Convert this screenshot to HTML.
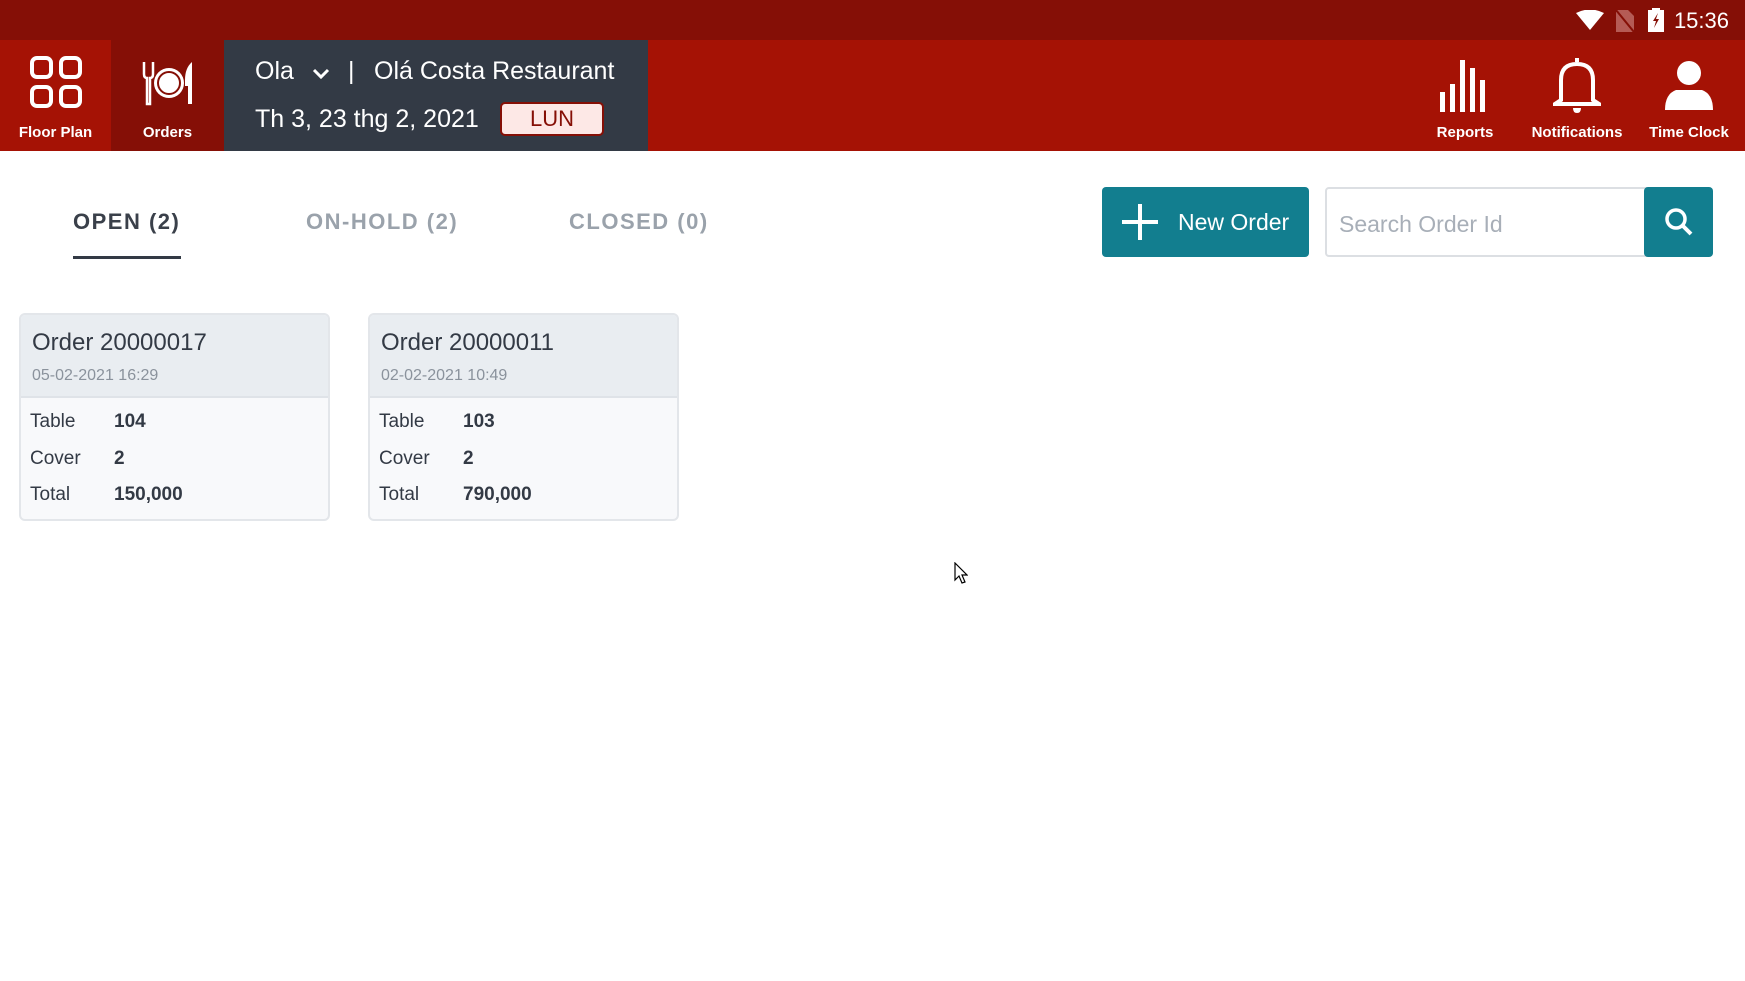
<!DOCTYPE html>
<html><head><meta charset="utf-8"><style>
*{margin:0;padding:0;box-sizing:border-box}
body{width:1745px;height:981px;background:#fff;font-family:"Liberation Sans",sans-serif;position:relative;overflow:hidden}
.abs{position:absolute}
.status{left:0;top:0;width:1745px;height:40px;background:#850f06}
.hdr{left:0;top:40px;width:1745px;height:111px;background:#a51205}
.tile{top:40px;height:111px;color:#fff;font-size:15px;font-weight:bold;text-align:center}
.tile .lbl{position:absolute;left:0;right:0;top:84px}
.tile svg{position:absolute;left:50%;transform:translateX(-50%);top:16px}
.panel{left:224px;top:40px;width:424px;height:111px;background:#333a45;color:#fff}
.tab{top:209px;font-size:22px;letter-spacing:1.5px;font-weight:bold}
.card{width:311px;height:208px;border:2px solid #e3e6ea;border-radius:6px;background:#f8f9fb;top:313px;overflow:hidden}
.card .h{height:83px;background:#e9edf1;border-bottom:2px solid #dfe3e8;padding:14px 0 0 11px}
.card .t{font-size:24px;color:#333a45}
.card .d{font-size:16px;color:#8a929c;margin-top:10px}
.row{position:absolute;left:9px;font-size:19px;color:#333a45}
.row b{position:absolute;left:84px;white-space:nowrap}
</style></head><body>
<div class="abs status"></div>
<div class="abs" style="right:16px;top:8px;color:#fff;font-size:22px">15:36</div>
<svg class="abs" style="left:1576px;top:10px" width="28" height="20"><path d="M0 3 Q14 -4 28 3 L14 20Z" fill="#fff"/></svg>
<svg class="abs" style="left:1616px;top:10px" width="18" height="22"><path d="M0 0H12L18 6V22H0Z" fill="#b55b55"/><path d="M0 0L18 22" stroke="#850f06" stroke-width="2"/></svg>
<svg class="abs" style="left:1648px;top:8px" width="16" height="24"><path d="M4 0H12V2H16V24H0V2H4Z" fill="#fff"/><path d="M10 5L5 13H8L6 20L11 11H8Z" fill="#850f06"/></svg>
<div class="abs hdr"></div>
<div class="abs tile" style="left:0;width:111px;background:#a51205"><svg width="52" height="52" viewBox="0 0 52 52" fill="none" stroke="#fff" stroke-width="4"><rect x="2" y="2" width="19" height="19" rx="5"/><rect x="31" y="2" width="19" height="19" rx="5"/><rect x="2" y="31" width="19" height="19" rx="5"/><rect x="31" y="31" width="19" height="19" rx="5"/></svg><div class="lbl">Floor Plan</div></div>
<div class="abs tile" style="left:111px;width:113px;background:#850f06"><svg width="52" height="46" viewBox="0 0 52 46" style="top:20px"><path d="M2 2V14Q2 18 5 18V44H8V18Q11 18 11 14V2" fill="none" stroke="#fff" stroke-width="2.5"/><circle cx="27" cy="23" r="15" fill="#fff"/><circle cx="27" cy="23" r="11" fill="none" stroke="#850f06" stroke-width="2"/><path d="M50 2Q43 8 43 20V26H46V44H50Z" fill="#fff"/></svg><div class="lbl">Orders</div></div>
<div class="abs panel">
<div class="abs" style="left:31px;top:17px;font-size:25px">Ola</div>
<svg class="abs" style="left:88px;top:28px" width="18" height="12"><path d="M2 2L9 9L16 2" fill="none" stroke="#fff" stroke-width="3"/></svg>
<div class="abs" style="left:124px;top:17px;font-size:25px">|</div>
<div class="abs" style="left:150px;top:17px;font-size:25px;white-space:nowrap">Olá Costa Restaurant</div>
<div class="abs" style="left:31px;top:65px;font-size:25px;white-space:nowrap">Th 3, 23 thg 2, 2021</div>
<div class="abs" style="left:276px;top:62px;width:104px;height:34px;background:#fde8e6;border:2px solid #850f06;border-radius:5px;color:#850f06;font-size:22px;text-align:center;line-height:30px">LUN</div>
</div>
<div class="abs tile" style="left:1410px;width:110px"><svg width="50" height="52" viewBox="0 0 50 52" style="top:20px"><rect x="0" y="32" width="5" height="20" fill="#fff"/><rect x="10" y="24" width="5" height="28" fill="#fff"/><rect x="20" y="0" width="5" height="52" fill="#fff"/><rect x="30" y="8" width="5" height="44" fill="#fff"/><rect x="40" y="20" width="5" height="32" fill="#fff"/></svg><div class="lbl">Reports</div></div>
<div class="abs tile" style="left:1522px;width:110px"><svg width="48" height="58" viewBox="0 0 48 58" style="top:16px"><path d="M24 2V6 M8 44V24Q8 8 24 8Q40 8 40 24V44L46 48H2Z" fill="none" stroke="#fff" stroke-width="4"/><path d="M20 52H28Q28 57 24 57Q20 57 20 52Z" fill="#fff"/></svg><div class="lbl">Notifications</div></div>
<div class="abs tile" style="left:1633px;width:112px"><svg width="50" height="50" viewBox="0 0 50 50" style="top:20px"><circle cx="25" cy="13" r="12" fill="#fff"/><path d="M1 50Q1 34 12 30H38Q49 34 49 50Z" fill="#fff"/></svg><div class="lbl">Time Clock</div></div>
<div class="abs tab" style="left:73px;color:#3a404a">OPEN (2)</div>
<div class="abs" style="left:73px;top:256px;width:108px;height:3px;background:#333a45"></div>
<div class="abs tab" style="left:306px;color:#9aa2ab">ON-HOLD (2)</div>
<div class="abs tab" style="left:569px;color:#9aa2ab">CLOSED (0)</div>
<div class="abs" style="left:1102px;top:187px;width:207px;height:70px;background:#127e8f;border-radius:4px;color:#fff;font-size:23px">
<svg class="abs" style="left:20px;top:17px" width="36" height="36"><path d="M18 0V36M0 18H36" stroke="#fff" stroke-width="4"/></svg>
<div class="abs" style="left:76px;top:22px">New Order</div></div>
<div class="abs" style="left:1325px;top:187px;width:330px;height:70px;border:2px solid #dcdfe3;border-radius:4px;color:#a8afb8;font-size:23px;padding:22px 0 0 12px">Search Order Id</div>
<div class="abs" style="left:1644px;top:187px;width:69px;height:70px;background:#127e8f;border-radius:4px">
<svg class="abs" style="left:20px;top:20px" width="30" height="30"><circle cx="12" cy="12" r="9" fill="none" stroke="#fff" stroke-width="3.5"/><path d="M18 18L27 27" stroke="#fff" stroke-width="4"/></svg></div>
<div class="abs card" style="left:19px"><div class="h"><div class="t">Order 20000017</div><div class="d">05-02-2021 16:29</div></div>
<div class="row" style="top:96px">Table<b>104</b></div><div class="row" style="top:133px">Cover<b>2</b></div><div class="row" style="top:169px">Total<b>150,000</b></div></div>
<div class="abs card" style="left:368px"><div class="h"><div class="t">Order 20000011</div><div class="d">02-02-2021 10:49</div></div>
<div class="row" style="top:96px">Table<b>103</b></div><div class="row" style="top:133px">Cover<b>2</b></div><div class="row" style="top:169px">Total<b>790,000</b></div></div>
<svg class="abs" style="left:954px;top:562px" width="14" height="22"><path d="M1 1V18L5 14L8 21L11 20L8 13H13Z" fill="#fff" stroke="#000" stroke-width="1.2"/></svg>
</body></html>
